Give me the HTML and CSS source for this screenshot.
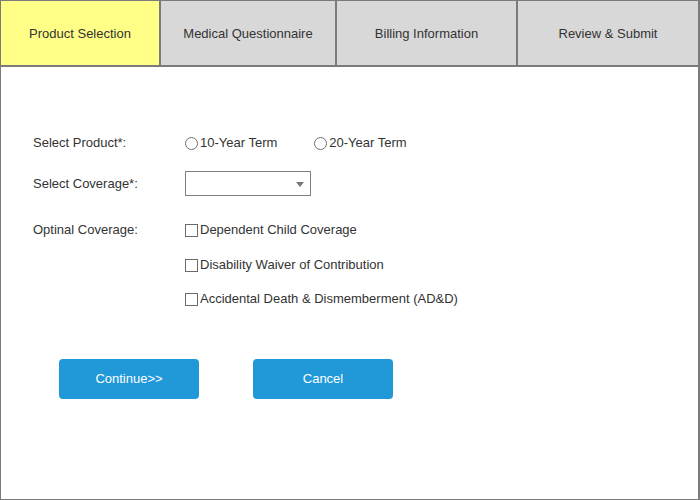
FILE: index.html
```html
<!DOCTYPE html>
<html>
<head>
<meta charset="utf-8">
<link rel="stylesheet" href="styles.css">
</head>
<body>
<div class="frame">
  <div class="tabs">
    <div class="tab tab-active tab-1">Product Selection</div>
    <div class="tab tab-2">Medical Questionnaire</div>
    <div class="tab tab-3">Billing Information</div>
    <div class="tab tab-4">Review &amp; Submit</div>
  </div>
  <div class="form">
    <div class="row row-product">
      <div class="label">Select Product*:</div>
      <div class="options">
        <span class="opt opt-radio"><span class="radio"></span>10-Year Term</span>
        <span class="opt opt-radio"><span class="radio"></span>20-Year Term</span>
      </div>
    </div>
    <div class="row row-coverage">
      <div class="label">Select Coverage*:</div>
      <div class="select"><span class="arrow"></span></div>
    </div>
    <div class="row row-optional">
      <div class="label label-top">Optinal Coverage:</div>
      <div class="checks">
        <span class="opt"><span class="check"></span>Dependent Child Coverage</span>
        <span class="opt"><span class="check"></span>Disability Waiver of Contribution</span>
        <span class="opt"><span class="check"></span>Accidental Death &amp; Dismemberment (AD&amp;D)</span>
      </div>
    </div>
    <div class="buttons">
      <button class="btn">Continue&gt;&gt;</button>
      <button class="btn">Cancel</button>
    </div>
  </div>
</div>
</body>
</html>
```
FILE: styles.css
```css
* { box-sizing: border-box; }
html, body { margin: 0; padding: 0; background: #fff; }
body {
  font-family: Arial, "Liberation Sans", sans-serif;
  font-size: 13px;
  color: #333;
}
.frame {
  width: 700px;
  height: 500px;
  border: 1px solid #7b7b7b;
  border-right-width: 2px;
  overflow: hidden;
}
.tabs {
  display: flex;
  height: 66px;
  border-bottom: 2px solid #7b7b7b;
}
.tab {
  display: flex;
  align-items: center;
  justify-content: center;
  background: #d8d8d8;
  color: #333;
  border-left: 2px solid #7b7b7b;
  padding-top: 1px;
}
.tab-1 { width: 158px; border-left: none; }
.tab-2 { width: 176px; }
.tab-3 { width: 181px; }
.tab-4 { flex: 1; }
.tab-active { background: #ffff88; }

.form {
  padding: 66px 0 0 32px;
}
.row {
  display: flex;
}
.label {
  width: 152px;
  flex: none;
  line-height: 20px;
}
.row-product { height: 20px; align-items: center; }
.row-coverage { margin-top: 18px; height: 25px; align-items: center; }
.row-optional { margin-top: 24px; }
.options { display: flex; gap: 37px; }
.opt {
  display: flex;
  align-items: center;
  height: 20px;
  line-height: 20px;
  gap: 2px;
}
.radio {
  width: 13px;
  height: 13px;
  border: 1px solid #707070;
  border-radius: 50%;
  background: #fff;
  flex: none;
}
.check {
  width: 13px;
  height: 13px;
  border: 1px solid #6a6a6a;
  background: #fff;
  flex: none;
  margin-top: 1px;
}
.select {
  position: relative;
  width: 126px;
  height: 25px;
  border: 1px solid #7f7f7f;
  background: #fff;
}
.arrow {
  position: absolute;
  right: 6px;
  top: 10px;
  width: 0;
  height: 0;
  border-left: 4px solid transparent;
  border-right: 4px solid transparent;
  border-top: 5px solid #777;
}
.checks {
  display: flex;
  flex-direction: column;
  gap: 14.5px;
}
.buttons {
  display: flex;
  gap: 54px;
  margin-top: 50px;
  padding-left: 26px;
}
.btn {
  width: 140px;
  height: 40px;
  border: none;
  border-radius: 4px;
  background: #2198d8;
  color: #fff;
  font-family: Arial, "Liberation Sans", sans-serif;
  font-size: 13px;
  padding: 0 0 2px 0;
}
```
